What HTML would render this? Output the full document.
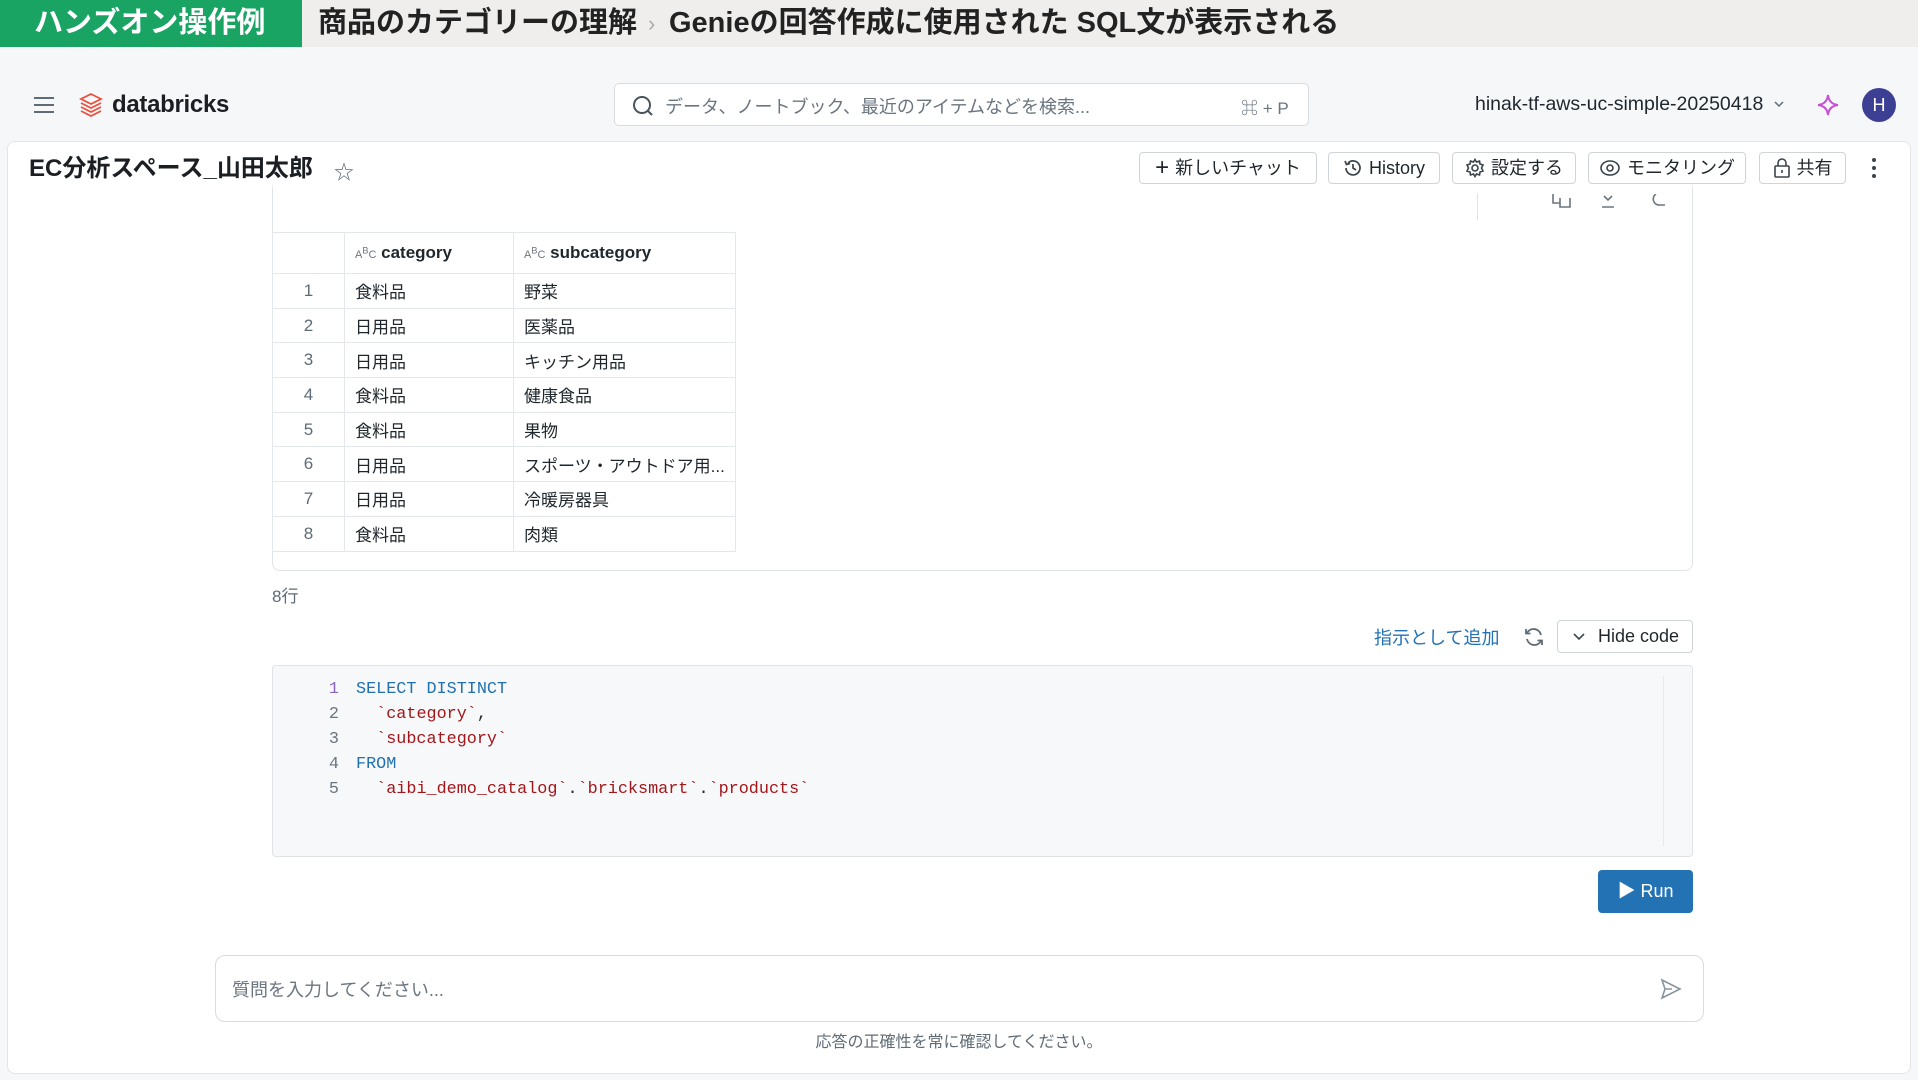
<!DOCTYPE html>
<html><head><meta charset="utf-8">
<style>
*{box-sizing:border-box;margin:0;padding:0}
body{width:1918px;height:1080px;overflow:hidden;background:#f6f7f9;font-family:"Liberation Sans","Noto Sans CJK JP",sans-serif;color:#1f272d;position:relative}
.abs{position:absolute}
.banner{left:0;top:0;width:1918px;height:47px;background:#efeeec}
.green{left:0;top:0;width:302px;height:47px;background:#19a463;color:#fff;font-size:29px;font-weight:bold;line-height:47px;padding-left:34px;white-space:nowrap}
.btitle{top:0;line-height:47px;font-size:29px;font-weight:bold;color:#222;white-space:nowrap}
.search{left:614px;top:83px;width:695px;height:43px;background:#fff;border:1px solid #d8dce0;border-radius:5px}
.card{left:7px;top:141px;width:1904px;height:933px;background:#fff;border:1px solid #e3e5e8;border-radius:8px;overflow:hidden}
.btn{position:absolute;top:152px;height:32px;border:1px solid #cfd4d9;border-radius:4px;background:#fff;font-size:18px;line-height:30px;color:#1f272d;white-space:nowrap;display:flex;align-items:center;justify-content:center;gap:6px}
table{border-collapse:collapse;position:absolute;left:272px;top:232px;font-size:17px}
td{border:1px solid #e3e6ea;height:34.7px;padding:0 10px;white-space:nowrap}
td.n{text-align:center;color:#5f6b75;width:72px}
tr.h td{height:41px;font-weight:bold}
.code{left:272px;top:665px;width:1421px;height:192px;background:#f7f8fa;border:1px solid #dfe2e6;border-radius:4px;font-family:"Liberation Mono",monospace;font-size:16.8px}
.ln{position:absolute;left:0;width:66px;text-align:right;color:#6b7580}
.cl{position:absolute;left:83px;white-space:pre}
.k{color:#2270b1}.s{color:#a3161a}
</style></head><body>
<div class="abs banner"></div>
<div class="abs green">ハンズオン操作例</div>
<div class="abs btitle" style="left:318px">商品のカテゴリーの理解</div>
<div class="abs btitle" style="left:648px;color:#aaa;font-weight:normal;font-size:22px">›</div>
<div class="abs btitle" style="left:669px">Genieの回答作成に使用された SQL文が表示される</div>

<svg class="abs" style="left:34px;top:96px" width="20" height="18"><g stroke="#5f6b75" stroke-width="2"><line x1="0" y1="2" x2="20" y2="2"/><line x1="0" y1="9" x2="20" y2="9"/><line x1="0" y1="16" x2="20" y2="16"/></g></svg>
<svg class="abs" style="left:78px;top:92px" width="26" height="26" viewBox="0 0 26 26" fill="none" stroke="#e8513f" stroke-width="1.8"><path d="M13 2 L23 7 L13 12 L3 7 Z"/><path d="M3 11 L13 16 L23 11"/><path d="M3 15 L13 20 L23 15"/><path d="M3 19 L13 24 L23 19"/></svg>
<div class="abs" style="left:112px;top:91px;font-size:24px;font-weight:600;color:#1b1f23;letter-spacing:-0.3px">databricks</div>

<div class="abs search"></div>
<svg class="abs" style="left:632px;top:95px" width="22" height="22" fill="none" stroke="#4a545c" stroke-width="2"><circle cx="10" cy="10" r="8"/><line x1="15.5" y1="15.5" x2="20" y2="20"/></svg>
<div class="abs" style="left:665px;top:93px;font-size:18px;color:#6b7580">データ、ノートブック、最近のアイテムなどを検索...</div>
<div class="abs" style="left:1241px;top:94px;font-size:17px;color:#6b7580">⌘ + P</div>
<div class="abs" style="left:1475px;top:93px;font-size:19.5px;color:#1f272d">hinak-tf-aws-uc-simple-20250418</div>
<svg class="abs" style="left:1774px;top:101px" width="10" height="8" fill="none" stroke="#5f6b75" stroke-width="1.5"><path d="M1 1 L5 5 L9 1"/></svg>
<svg class="abs" style="left:1817px;top:94px" width="22" height="22" viewBox="0 0 22 22" fill="none" stroke="#c64fd6" stroke-width="2"><path d="M11 1 Q12 10 21 11 Q12 12 11 21 Q10 12 1 11 Q10 10 11 1Z"/></svg>
<div class="abs" style="left:1862px;top:88px;width:34px;height:34px;border-radius:50%;background:#3d3f94;color:#fff;font-size:18px;line-height:34px;text-align:center">H</div>

<div class="abs card"></div>
<div class="abs" style="left:29px;top:152px;font-size:24px;line-height:34px;font-weight:bold;color:#1b1f23;font-family:'Liberation Sans','Noto Sans CJK JP',sans-serif">EC分析スペース<span style="font-family:'Liberation Sans',sans-serif">_</span>山田太郎</div>
<div class="abs" style="left:334px;top:156px;font-size:20px;color:#5f6b75">☆</div>

<div class="btn" style="left:1139px;width:178px"><span style="font-size:24px;font-weight:300">+</span>新しいチャット</div>
<div class="btn" style="left:1328px;width:112px"><svg width="20" height="20" fill="none" stroke="#3a444c" stroke-width="1.7"><path d="M3 10 A7 7 0 1 0 5 5"/><path d="M2 3 L3.5 6.5 L7 5.5"/><path d="M10 6 V10 L13 12"/></svg>History</div>
<div class="btn" style="left:1452px;width:124px"><svg width="20" height="20" fill="none" stroke="#3a444c" stroke-width="1.6"><circle cx="10" cy="10" r="3"/><path d="M10 1.5 L11.5 4 L14.5 3 L15 6 L18 7 L16.5 10 L18 13 L15 14 L14.5 17 L11.5 16 L10 18.5 L8.5 16 L5.5 17 L5 14 L2 13 L3.5 10 L2 7 L5 6 L5.5 3 L8.5 4 Z"/></svg>設定する</div>
<div class="btn" style="left:1588px;width:158px"><svg width="22" height="20" fill="none" stroke="#3a444c" stroke-width="1.6"><ellipse cx="11" cy="10" rx="9" ry="7"/><circle cx="11" cy="10" r="3"/></svg>モニタリング</div>
<div class="btn" style="left:1759px;width:87px"><svg width="18" height="22" fill="none" stroke="#3a444c" stroke-width="1.6"><rect x="2" y="9" width="14" height="11" rx="1"/><path d="M5 9 V6 A4 4 0 0 1 13 6 V9"/><line x1="9" y1="13" x2="9" y2="16"/></svg>共有</div>
<svg class="abs" style="left:1870px;top:157px" width="8" height="22" fill="#3a444c"><circle cx="4" cy="3" r="2"/><circle cx="4" cy="11" r="2"/><circle cx="4" cy="19" r="2"/></svg>

<div class="abs" style="left:272px;top:185px;width:1421px;height:386px;border:1px solid #e0e3e7;border-top:none;border-radius:0 0 8px 8px"></div>
<div class="abs" style="left:8px;top:186px;width:1900px;height:1px;background:#fff"></div>
<svg class="abs" style="left:1550px;top:194px" width="120" height="18" fill="none" stroke="#6b7580" stroke-width="1.6"><path d="M3 0 V9 H10 M10 4 V13 H20 V4"/><path d="M54 2 L58 6 L62 2 M52 13 H64"/><path d="M106 0 A6 6 0 0 0 110 11 H115"/></svg>
<div class="abs" style="left:1477px;top:193px;width:1px;height:27px;background:#e0e3e7"></div>

<table>
<tr class="h"><td class="n"></td><td style="width:169px"><span style="font-size:11px;color:#6b7580;font-weight:normal">A<sup>B</sup>C</span> category</td><td style="width:221px"><span style="font-size:11px;color:#6b7580;font-weight:normal">A<sup>B</sup>C</span> subcategory</td></tr>
<tr><td class="n">1</td><td>食料品</td><td>野菜</td></tr>
<tr><td class="n">2</td><td>日用品</td><td>医薬品</td></tr>
<tr><td class="n">3</td><td>日用品</td><td>キッチン用品</td></tr>
<tr><td class="n">4</td><td>食料品</td><td>健康食品</td></tr>
<tr><td class="n">5</td><td>食料品</td><td>果物</td></tr>
<tr><td class="n">6</td><td>日用品</td><td>スポーツ・アウトドア用...</td></tr>
<tr><td class="n">7</td><td>日用品</td><td>冷暖房器具</td></tr>
<tr><td class="n">8</td><td>食料品</td><td>肉類</td></tr>
</table>

<div class="abs" style="left:272px;top:582px;font-size:17px;color:#5f6b75">8行</div>
<div class="abs" style="left:1374px;top:624px;font-size:18px;color:#2272b4">指示として追加</div>
<svg class="abs" style="left:1523px;top:626px" width="22" height="22" fill="none" stroke="#5f6b75" stroke-width="1.8"><path d="M18 9 A7.5 7.5 0 0 0 4 7"/><path d="M4 13 A7.5 7.5 0 0 0 18 15"/><path d="M3 3 V7.5 H7.5"/><path d="M19 19 V14.5 H14.5"/></svg>
<div class="abs" style="left:1557px;top:620px;width:136px;height:33px;border:1px solid #cfd4d9;border-radius:4px;background:#fff;font-size:18px;line-height:31px;padding-left:40px;color:#1f272d">Hide code</div>
<svg class="abs" style="left:1573px;top:633px" width="12" height="8" fill="none" stroke="#3a444c" stroke-width="1.6"><path d="M1 1 L6 6 L11 1"/></svg>

<div class="abs code">
<div class="ln" style="top:14px;color:#8a63c9">1</div><div class="cl k" style="top:14px">SELECT DISTINCT</div>
<div class="ln" style="top:39px">2</div><div class="cl" style="top:39px">  <span class="s">`category`</span>,</div>
<div class="ln" style="top:64px">3</div><div class="cl s" style="top:64px">  `subcategory`</div>
<div class="ln" style="top:89px">4</div><div class="cl k" style="top:89px">FROM</div>
<div class="ln" style="top:114px">5</div><div class="cl" style="top:114px">  <span class="s">`aibi_demo_catalog`</span>.<span class="s">`bricksmart`</span>.<span class="s">`products`</span></div>
<div style="position:absolute;left:1390px;top:10px;width:1px;height:170px;background:#e6e8eb"></div>
</div>

<div class="abs" style="left:1598px;top:870px;width:95px;height:43px;background:#2272b4;border-radius:4px;color:#fff;font-size:18px;line-height:43px;text-align:center">▶ Run</div>

<div class="abs" style="left:215px;top:955px;width:1489px;height:67px;border:1px solid #d8dce0;border-radius:10px;background:#fff"></div>
<div class="abs" style="left:232px;top:976px;font-size:18px;color:#6b7580">質問を入力してください...</div>
<svg class="abs" style="left:1660px;top:978px" width="22" height="22" fill="none" stroke="#8a949c" stroke-width="1.6"><path d="M2 2 L20 11 L2 20 L5 11 Z M5 11 H12"/></svg>
<div class="abs" style="left:0;width:1918px;top:1028px;text-align:center;font-size:16px;color:#5f6b75">応答の正確性を常に確認してください。</div>
</body></html>
